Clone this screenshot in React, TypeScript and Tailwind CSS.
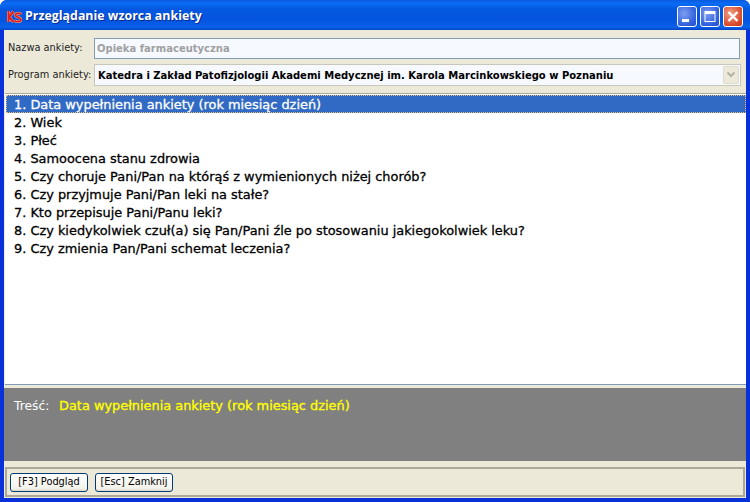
const items = [
  "Data wypełnienia ankiety (rok miesiąc dzień)",
  "Wiek",
  "Płeć",
  "Samoocena stanu zdrowia",
  "Czy choruje Pani/Pan na którąś z wymienionych niżej chorób?",
  "Czy przyjmuje Pani/Pan leki na stałe?",
  "Kto przepisuje Pani/Panu leki?",
  "Czy kiedykolwiek czuł(a) się Pan/Pani źle po stosowaniu jakiegokolwiek leku?",
  "Czy zmienia Pan/Pani schemat leczenia?",
];

function Logo() {
  return (
    <svg width="16" height="16" viewBox="0 0 16 16" className="shrink-0">
      <path d="M2.500 2v11M3 8l4.500-5.500M3 8l4.500 5" stroke="#f0b0a0" strokeWidth="3" fill="none" />
      <path d="M15 5.500c-1-2-5.500-1.500-5.500.7s5.500 2 5.500 4.400-4.500 2.600-6.500 1" stroke="#f0b0a0" strokeWidth="2.800" fill="none" />
      <path d="M2.500 2v11M3 8l4.500-5.500M3 8l4.500 5" stroke="#e41c14" strokeWidth="2" fill="none" />
      <path d="M15 5.500c-1-2-5.500-1.500-5.500.7s5.500 2 5.500 4.400-4.500 2.600-6.500 1" stroke="#e41c14" strokeWidth="1.800" fill="none" />
    </svg>
  );
}

function WinBtn({ kind }: { kind: "min" | "max" | "close" }) {
  const bg =
    kind === "close"
      ? "bg-[radial-gradient(circle_at_35%_35%,#f0a088,#d8492a_70%,#c23a1c)]"
      : "bg-[radial-gradient(circle_at_35%_35%,#7d9df0,#2f5fdc_70%,#2a4fc8)]";
  return (
    <div className={`w-[20px] h-[21px] rounded-[3px] border border-white flex items-center justify-center ${bg}`}>
      <svg width="18" height="19" viewBox="0 0 18 19">
        {kind === "min" && <rect x="4" y="12" width="7" height="3" fill="#fff" />}
        {kind === "max" && (
          <path d="M3.500 4h11v11h-11zM4.500 7v7h9V7z" fill="#fff" fillRule="evenodd" />
        )}
        {kind === "close" && <path d="M4.500 5l9 9M13.500 5l-9 9" stroke="#fff" strokeWidth="2.400" />}
      </svg>
    </div>
  );
}

function XpButton({ children }: { children: string }) {
  return (
    <button className="w-[78px] h-[19px] rounded-[3px] border border-[#003c74] bg-[linear-gradient(#fff,#f3f2ea_85%,#dcd8cc)] text-[9.8px] leading-none text-black flex items-center justify-center whitespace-nowrap">
      {children}
    </button>
  );
}

export default function App() {
  return (
    <div className="w-[750px] h-[502px] overflow-hidden flex flex-col bg-[#0831d9] font-['DejaVu_Sans',sans-serif] rounded-t-[7px]">
      <div className="h-[30px] shrink-0 flex items-center pl-[6px] pr-[7px] pt-[3px] bg-[linear-gradient(#0a5ae0,#0a6cf5_12%,#0458e0_30%,#0455e0_70%,#0a62ea_90%,#0344c8)]">
        <Logo />
        <span className="ml-[3px] text-white font-bold font-['Open_Sans',sans-serif] text-[12.4px] [text-shadow:1px_1px_0_#0a2a90] grow">
          Przeglądanie wzorca ankiety
        </span>
        <div className="flex gap-[3px]">
          <WinBtn kind="min" />
          <WinBtn kind="max" />
          <WinBtn kind="close" />
        </div>
      </div>

      <div className="grow flex flex-col mx-[4px] mb-[4px] bg-[#ece9d8] min-h-0">
        <div className="h-[63px] shrink-0 px-[4px] pt-[8px] flex flex-col gap-[5px] text-[#222]">
          <div className="flex items-center h-[21px]">
            <span className="w-[86px] text-[9.8px] whitespace-nowrap shrink-0">Nazwa ankiety:</span>
            <div className="grow mr-[2px] h-[21px] border border-[#7f9db9] bg-[#f6f9ff] flex items-center px-[2px] text-[#a0a0a0] font-bold text-[10px]">
              Opieka farmaceutyczna
            </div>
          </div>
          <div className="flex items-center h-[22px]">
            <span className="w-[86px] text-[9.8px] whitespace-nowrap shrink-0">Program ankiety:</span>
            <div className="grow mr-[1px] h-[22px] border border-[#c9c7ba] bg-[#f6f9ff] flex items-center pl-[3px] text-black font-bold text-[10px]">
              <span className="grow whitespace-nowrap">
                Katedra i Zakład Patofizjologii Akademi Medycznej im. Karola Marcinkowskiego w Poznaniu
              </span>
              <div className="w-[16px] h-[18px] mr-[1px] bg-[#ece9d8] border border-[#dedccf] rounded-[2px] flex items-center justify-center">
                <svg width="10" height="8" viewBox="0 0 10 8">
                  <path d="M1.500 1.500L5 5l3.500-3.500" stroke="#b4b2a4" strokeWidth="2" fill="none" />
                </svg>
              </div>
            </div>
          </div>
        </div>

        <div className="h-[292px] shrink-0 border-t border-t-[#aca899] border-b border-b-[#7f9db9] ml-[1px] bg-white pt-[1px] pl-[1px]">
          {items.map((t, i) => (
            <div
              key={t}
              className={`h-[18px] flex items-center pl-[8px] pt-[1px] text-[12.9px] [-webkit-text-stroke:0.3px] whitespace-nowrap ${
                i === 0 ? "bg-[#316ac5] text-white outline-1 -outline-offset-1 outline-dotted outline-[#e0c080]" : "text-black"
              }`}
            >
              {i + 1}. {t}
            </div>
          ))}
        </div>

        <div className="h-[3px] shrink-0" />

        <div className="h-[73px] shrink-0 bg-[#808080] pt-[10px] pl-[10px] flex items-start leading-[16px]">
          <span className="text-white w-[45px] shrink-0 text-[12.300px]">Treść:</span>
          <span className="text-[#ffff00] text-[12.9px] [-webkit-text-stroke:0.35px]">Data wypełnienia ankiety (rok miesiąc dzień)</span>
        </div>

        <div className="h-[6px] shrink-0" />

        <div className="grow border-2 border-[#aca899] mx-[1px] mb-[1px] flex items-center pl-[3px] gap-[7px]">
          <XpButton>[F3] Podgląd</XpButton>
          <XpButton>[Esc] Zamknij</XpButton>
        </div>
      </div>
    </div>
  );
}
